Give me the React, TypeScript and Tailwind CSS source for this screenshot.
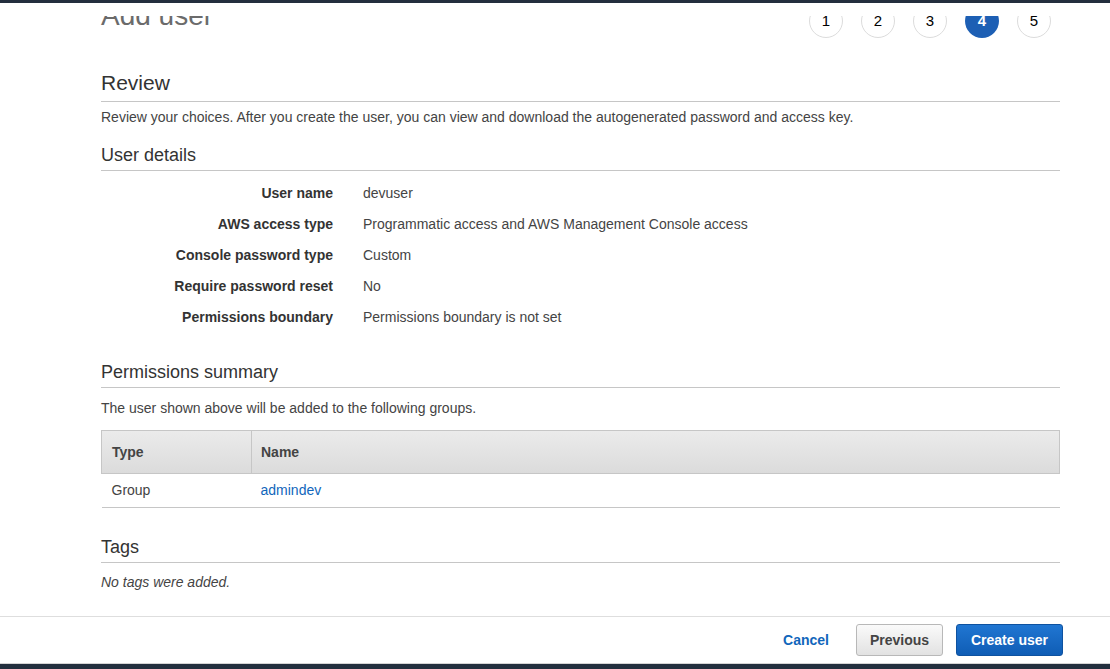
const details: [string, string][] = [
  ["User name", "devuser"],
  ["AWS access type", "Programmatic access and AWS Management Console access"],
  ["Console password type", "Custom"],
  ["Require password reset", "No"],
  ["Permissions boundary", "Permissions boundary is not set"],
];

function SectionHeading({ title }: { title: string }) {
  return (
    <h2 className="text-[18px] leading-[22px] pb-[4px] border-b border-[#c6c6c6] text-[#333]">
      {title}
    </h2>
  );
}

export default function App() {
  return (
    <div className="w-[1110px] h-[669px] flex flex-col bg-white text-[#444] font-['Liberation_Sans',Arial,sans-serif] overflow-hidden">
      <div className="h-[3px] bg-[#232f3e]" />
      <div className="h-[13px]" />

      {/* scrolled title + wizard steps, clipped under the header */}
      <div className="h-[30px] overflow-hidden">
        <div className="-mt-[12px] flex items-start justify-between pl-[101px] pr-[59px]">
          <h1 className="text-[28px] leading-[28px] text-[#6b6b6b] -mt-[2px]">Add user</h1>
          <div className="flex gap-[18px]">
            {[1, 2, 3, 4, 5].map((n) => (
              <div
                key={n}
                className={
                  n === 4
                    ? "w-[34px] h-[34px] rounded-full bg-[#1d5fb4] text-white font-bold text-[15px] flex items-center justify-center"
                    : "w-[34px] h-[34px] rounded-full border border-[#dcdcdc] bg-white text-black text-[15px] flex items-center justify-center"
                }
              >
                {n}
              </div>
            ))}
          </div>
        </div>
      </div>

      <main className="pl-[101px] pr-[50px]">
        <h2 className="mt-[24px] text-[21px] leading-[26px] pb-[5px] border-b border-[#c6c6c6] text-[#333]">
          Review
        </h2>
        <p className="mt-[5px] text-[14px] leading-[20px]">
          Review your choices. After you create the user, you can view and download the autogenerated password and access key.
        </p>

        <div className="mt-[17px]">
          <SectionHeading title="User details" />
        </div>
        <div className="mt-[7px]">
          {details.map(([label, value]) => (
            <div key={label} className="flex items-center h-[31px] text-[14px]">
              <div className="w-[232px] text-right font-bold text-[#333]">{label}</div>
              <div className="pl-[30px]">{value}</div>
            </div>
          ))}
        </div>

        <div className="mt-[28px]">
          <SectionHeading title="Permissions summary" />
        </div>
        <p className="mt-[10px] text-[14px] leading-[20px]">
          The user shown above will be added to the following groups.
        </p>
        <table className="mt-[12px] w-full border-collapse text-[14px]">
          <thead>
            <tr className="bg-gradient-to-b from-[#ebebeb] to-[#dbdbdb]">
              <th className="w-[150px] h-[43px] border border-[#c6c6c6] text-left font-bold pl-[10px]">Type</th>
              <th className="h-[43px] border border-[#c6c6c6] text-left font-bold pl-[9px]">Name</th>
            </tr>
          </thead>
          <tbody>
            <tr className="border-b border-[#c6c6c6]">
              <td className="h-[34px] pl-[10px]">Group</td>
              <td className="h-[34px] pl-[9px] text-[#1166bb]">admindev</td>
            </tr>
          </tbody>
        </table>

        <div className="mt-[28px]">
          <SectionHeading title="Tags" />
        </div>
        <p className="mt-[9px] text-[14px] leading-[20px] italic">No tags were added.</p>
      </main>

      <footer className="mt-[24px] border-t border-[#dedede] h-[47px] flex items-center justify-end pr-[47px] text-[14px]">
        <button className="font-bold text-[#1166bb] mr-[27px]">Cancel</button>
        <button className="w-[87px] h-[32px] rounded-[3px] border border-[#b8b8b8] bg-gradient-to-b from-[#fafafa] to-[#e2e2e2] font-bold text-[#444] mr-[13px]">
          Previous
        </button>
        <button className="w-[107px] h-[32px] rounded-[3px] border border-[#0e52a0] bg-gradient-to-b from-[#2076d2] to-[#0f5db5] font-bold text-white">
          Create user
        </button>
      </footer>
      <div className="flex-1 border-t border-[#d5d5d5] bg-[#232f3e]" />
    </div>
  );
}
